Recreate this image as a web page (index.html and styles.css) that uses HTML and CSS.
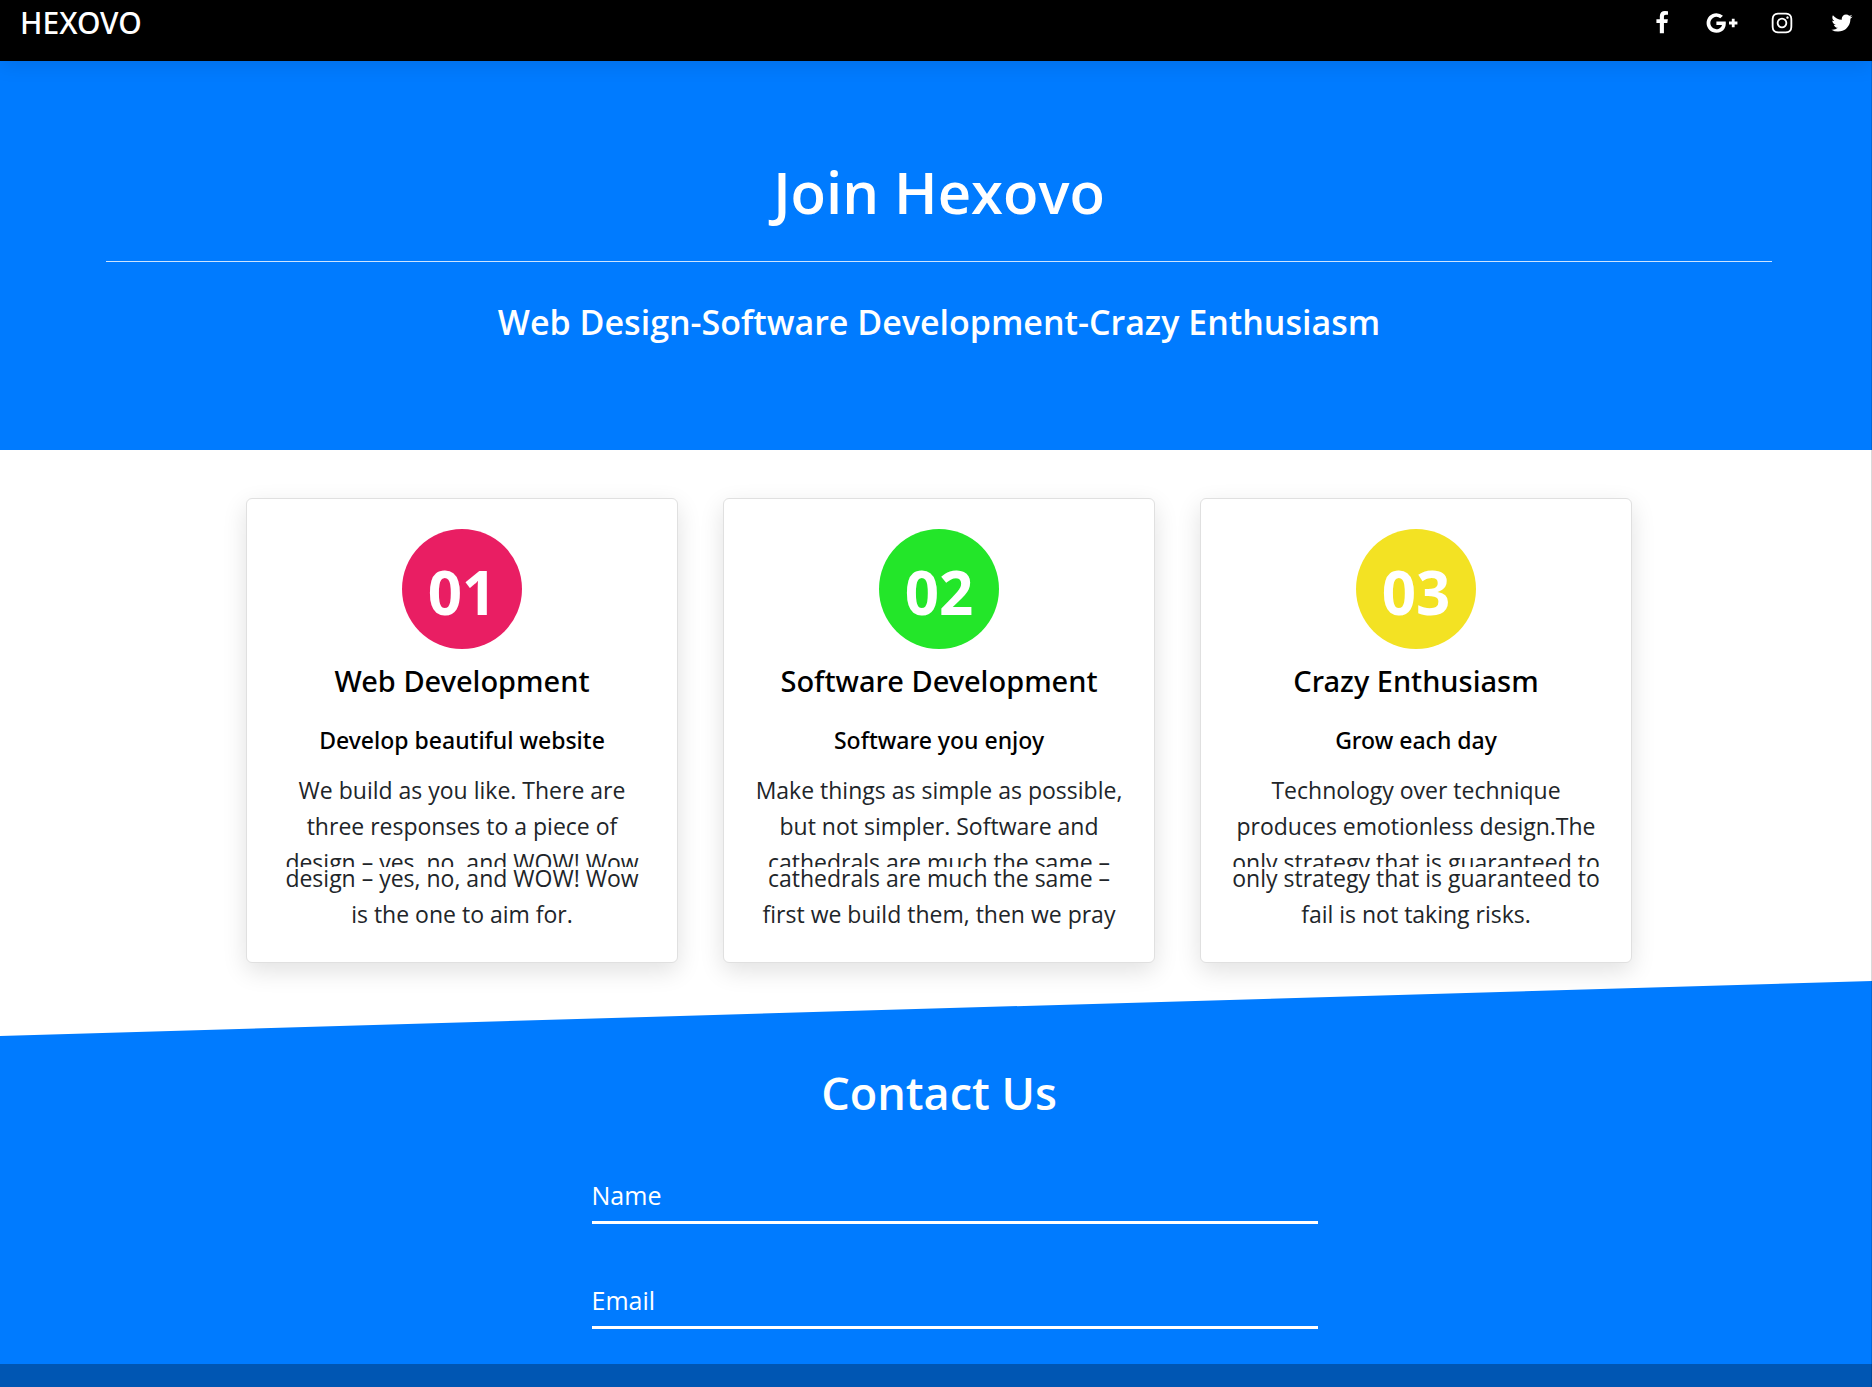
FILE: index.html
```html
<!DOCTYPE html>
<html lang="en">
<head>
<meta charset="utf-8">
<meta name="viewport" content="width=device-width, initial-scale=1">
<title>Hexovo</title>
<link rel="stylesheet" href="styles.css">
</head>
<body>
<header class="topbar">
  <a class="brand" href="#">HEXOVO</a>
  <nav class="social">
    <a href="#" aria-label="Facebook"><svg class="icon" viewBox="0 0 1792 1792"><path d="M1343 12v264h-157q-86 0-116 36t-30 108v189h293l-39 296h-254v759h-306v-759h-255v-296h255v-218q0-186 104-288.500t277-102.500q147 0 228 12z"/></svg></a>
    <a href="#" aria-label="Google Plus"><svg class="icon icon-wide" viewBox="-256 0 2304 1792"><path d="M1181 913q0 208-87 370.500t-248 254-369 91.500q-149 0-285-58t-234-156-156-234-58-285 58-285 156-234 234-156 285-58q286 0 491 192l-199 191q-117-113-292-113-123 0-227.500 62t-165.500 168.500-61 232.500 61 232.500 165.500 168.500 227.500 62q83 0 152.500-23t114.500-57.500 78.500-78.500 49-83 21.500-74h-416v-252h692q12 63 12 122zm867-122v210h-209v209h-210v-209h-209v-210h209v-209h210v209h209z"/></svg></a>
    <a href="#" aria-label="Instagram"><svg class="icon" viewBox="0 0 1792 1792"><path d="M1152 896q0-106-75-181t-181-75-181 75-75 181 75 181 181 75 181-75 75-181zm138 0q0 164-115 279t-279 115-279-115-115-279 115-279 279-115 279 115 115 279zm108-410q0 38-27 65t-65 27-65-27-27-65 27-65 65-27 65 27 27 65zm-502-220q-7 0-76.500-.5t-105.500 0-96.500 3-103 10-71.500 18.500q-50 20-88 58t-58 88q-11 29-18.500 71.500t-10 103-3 96.500 0 105.500.5 76.500-.5 76.500 0 105.500 3 96.500 10 103 18.500 71.500q20 50 58 88t88 58q29 11 71.500 18.500t103 10 96.500 3 105.500 0 76.500-.5 76.500.5 105.500 0 96.500-3 103-10 71.500-18.500q50-20 88-58t58-88q11-29 18.500-71.500t10-103 3-96.500 0-105.500-.5-76.500.5-76.500 0-105.500-3-96.500-10-103-18.500-71.500q-20-50-58-88t-88-58q-29-11-71.500-18.500t-103-10-96.500-3-105.500 0-76.500.5zm768 630q0 229-5 317-10 208-124 322t-322 124q-88 5-317 5t-317-5q-208-10-322-124t-124-322q-5-88-5-317t5-317q10-208 124-322t322-124q88-5 317-5t317 5q208 10 322 124t124 322q5 88 5 317z"/></svg></a>
    <a href="#" aria-label="Twitter"><svg class="icon" viewBox="0 0 1792 1792"><path d="M1684 408q-67 98-162 167 1 14 1 42 0 130-38 259.500t-115.500 248.500-184.500 210.500-258 146-323 54.500q-271 0-496-145 35 4 78 4 225 0 401-138-105-2-188-64.500t-114-159.500q33 5 61 5 43 0 85-11-112-23-185.500-111.500t-73.500-205.500v-4q68 38 146 41-66-44-105-115t-39-154q0-88 44-163 121 149 294.500 238.500t371.500 99.500q-8-38-8-74 0-134 94.500-228.500t228.500-94.500q140 0 236 102 109-21 205-78-37 115-142 178 93-10 186-50z"/></svg></a>
  </nav>
</header>
<main>
  <section class="hero">
    <h1>Join Hexovo</h1>
    <hr>
    <p class="tagline">Web Design-Software Development-Crazy Enthusiasm</p>
  </section>
  <section class="services">
    <div class="cards">
      <article class="card">
        <div class="number pink">01</div>
        <h2>Web Development</h2>
        <h3>Develop beautiful website</h3>
        <p class="intro">We build as you like. There are<br>three responses to a piece of<br>design – yes, no, and WOW! Wow</p>
        <p class="more">design – yes, no, and WOW! Wow<br>is the one to aim for.</p>
      </article>
      <article class="card">
        <div class="number green">02</div>
        <h2>Software Development</h2>
        <h3>Software you enjoy</h3>
        <p class="intro">Make things as simple as possible,<br>but not simpler. Software and<br>cathedrals are much the same –</p>
        <p class="more">cathedrals are much the same –<br>first we build them, then we pray</p>
      </article>
      <article class="card">
        <div class="number yellow">03</div>
        <h2>Crazy Enthusiasm</h2>
        <h3>Grow each day</h3>
        <p class="intro">Technology over technique<br>produces emotionless design.The<br>only strategy that is guaranteed to</p>
        <p class="more">only strategy that is guaranteed to<br>fail is not taking risks.</p>
      </article>
    </div>
  </section>
  <section class="contact">
    <h2>Contact Us</h2>
    <form class="fields">
      <div class="field">
        <label for="name">Name</label>
        <input id="name" type="text">
      </div>
      <div class="field">
        <label for="email">Email</label>
        <input id="email" type="email">
      </div>
    </form>
  </section>
</main>
<footer class="footer"></footer>
</body>
</html>
```
FILE: styles.css
```css
* {
  box-sizing: border-box;
}

body {
  margin: 0;
  min-height: 100vh;
  display: flex;
  flex-direction: column;
  font-family: "Open Sans", "Noto Sans", sans-serif;
  font-size: 23px;
  line-height: 36px;
  color: #212529;
  background: #fff;
}

/* thin edge along the right side of the window */
body::after {
  content: "";
  position: fixed;
  top: 0;
  right: 0;
  bottom: 0;
  width: 1px;
  background: rgba(0, 0, 0, 0.15);
}

h1, h2, h3, p {
  margin: 0;
}

.topbar {
  position: relative;
  display: flex;
  justify-content: space-between;
  align-items: flex-start;
  height: 61px;
  padding-left: 20px;
  background: #000;
  box-shadow: 0 4px 20px rgba(0, 0, 0, 0.1);
}

.brand {
  color: #fff;
  font-family: "Noto Sans", "Open Sans", sans-serif;
  font-size: 30px;
  font-weight: 500;
  line-height: 46px;
  text-decoration: none;
}

.social {
  display: flex;
  padding-top: 11px;
}

.social a {
  display: flex;
  justify-content: center;
  width: 60px;
}

.icon {
  display: block;
  width: 24px;
  height: 24px;
  fill: #fff;
}

.icon-wide {
  width: 32px;
}

.hero {
  padding: 95px 100px 106px 106px;
  color: #fff;
  text-align: center;
  background: #007bff;
}

.hero h1 {
  font-size: 58px;
  font-weight: 600;
  line-height: 72px;
}

.hero hr {
  height: 1px;
  margin: 33px 0 38px;
  border: 0;
  background: rgba(255, 255, 255, 0.8);
}

.tagline {
  font-size: 34px;
  font-weight: 600;
  line-height: 44px;
}

.services {
  padding: 48px 0 18px 6px;
}

.cards {
  display: grid;
  grid-template-columns: repeat(3, 1fr);
  gap: 45px;
  max-width: 1386px;
  margin: 0 auto;
}

.card {
  padding: 30px 0;
  color: #000;
  text-align: center;
  background: #fff;
  border: 1px solid #e0e0e0;
  border-radius: 6px;
  box-shadow: 0 8px 24px rgba(0, 0, 0, 0.12);
}

.number {
  width: 120px;
  height: 120px;
  margin: 0 auto 14px;
  border-radius: 50%;
  color: #fff;
  font-size: 60px;
  font-weight: 700;
  line-height: 126px;
}

.pink {
  background: #e91e63;
}

.green {
  background: #23e629;
}

.yellow {
  background: #f3e223;
}

.card h2,
.card h3 {
  font-family: "Noto Sans", "Open Sans", sans-serif;
  font-weight: 500;
}

.card h2 {
  font-size: 29px;
  line-height: 36px;
}

.card h3 {
  margin: 27px 0 18px;
  font-size: 23px;
  line-height: 28px;
}

.card p {
  color: #212529;
  white-space: nowrap;
}

.card .intro {
  height: 95px;
  overflow: hidden;
}

.card .more {
  margin-top: -7px;
}

.contact {
  padding: 84px 0 35px;
  color: #fff;
  background: #007bff;
  clip-path: polygon(0 55px, 100% 0, 100% 100%, 0 100%);
}

.contact h2 {
  padding-left: 6px;
  font-size: 45px;
  font-weight: 600;
  line-height: 56px;
  text-align: center;
}

.fields {
  display: grid;
  gap: 58px;
  width: 38.8%;
  margin: 56px auto 0 31.6%;
}

.field {
  display: grid;
}

.field label,
.field input {
  grid-area: 1 / 1;
}

.field label {
  font-size: 25px;
}

.field input {
  width: 100%;
  height: 47px;
  padding: 0;
  border: 0;
  border-bottom: 3px solid #fff;
  outline: 0;
  color: #fff;
  font: inherit;
  background: transparent;
}

.footer {
  flex: 1;
  min-height: 24px;
  background: #0056b3;
}
```
